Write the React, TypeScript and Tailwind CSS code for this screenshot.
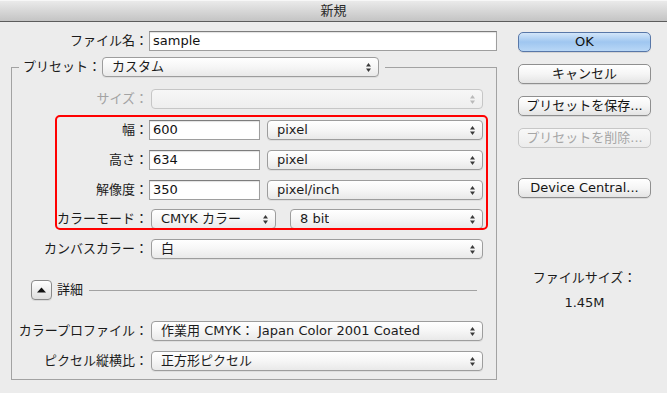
import type { ReactNode } from 'react';

// tiny up/down arrows of a mac popup button
function Arrows({ disabled }: { disabled?: boolean }) {
  return (
    <svg width="5" height="9" viewBox="0 0 5 9" className="ml-auto mr-[7px] shrink-0">
      <path d="M0 3.6 L2.5 0 L5 3.6 Z" fill={disabled ? '#b9b9b9' : '#3a3a3a'} />
      <path d="M0 5.4 L2.5 9 L5 5.4 Z" fill={disabled ? '#b9b9b9' : '#3a3a3a'} />
    </svg>
  );
}

function Select({ value, className, disabled }: { value?: ReactNode; className: string; disabled?: boolean }) {
  return (
    <div
      className={`flex h-[20px] shrink-0 items-center rounded-[4px] border pl-[9px] ${
        disabled
          ? 'border-[#c6c6c6] bg-linear-to-b from-[#f7f7f7] to-[#eeeeee] text-[#a0a0a0]'
          : 'border-[#9d9d9d] bg-linear-to-b from-white via-[#f6f6f6] to-[#e9e9e9] text-[#1b1b1b] shadow-[0_1px_0_rgba(0,0,0,0.06)]'
      } ${className}`}
    >
      <span className="truncate leading-[18px]">{value}</span>
      <Arrows disabled={disabled} />
    </div>
  );
}

function Field({ value, className }: { value: string; className: string }) {
  return (
    <div
      className={`flex h-[20px] shrink-0 items-center border border-[#9e9e9e] border-t-[#7d7d7d] bg-white pl-[3px] text-[#111] shadow-[inset_0_1px_1px_rgba(0,0,0,0.12)] ${className}`}
    >
      <span className="leading-[18px]">{value}</span>
    </div>
  );
}

function Label({ children, className, muted }: { children: ReactNode; className: string; muted?: boolean }) {
  return (
    <div className={`shrink-0 text-right leading-[20px] ${muted ? 'text-[#a3a3a3]' : 'text-[#1b1b1b]'} ${className}`}>
      {children}
    </div>
  );
}

function Button({ children, className = '', disabled, primary }: { children: ReactNode; className?: string; disabled?: boolean; primary?: boolean }) {
  let look = 'border-[#8f8f8f] bg-linear-to-b from-white via-[#f5f5f5] to-[#e4e4e4] text-[#141414] shadow-[0_1px_0_rgba(0,0,0,0.08)]';
  if (primary) look = 'border-[#5877a8] bg-linear-to-b from-[#d3e6f9] via-[#9fc6f0] to-[#b8d7f6] text-[#111] shadow-[0_1px_0_rgba(0,0,0,0.1)]';
  if (disabled) look = 'border-[#c7c7c7] bg-linear-to-b from-[#f8f8f8] to-[#ececec] text-[#a6a6a6]';
  return (
    <div className={`flex h-[20px] w-[133px] items-center justify-center rounded-[5px] border leading-[18px] ${look} ${className}`}>
      {children}
    </div>
  );
}

export default function App() {
  return (
    <div className="flex h-[393px] w-[667px] flex-col overflow-hidden bg-[#ececec] font-['DejaVu_Sans','Noto_Sans_CJK_JP',sans-serif] text-[13px]">
      {/* title bar */}
      <div className="flex h-[22px] shrink-0 items-center justify-center border-b border-[#5c5c5c] bg-linear-to-b from-[#ececec] to-[#c4c4c4] text-[#2a2a2a] shadow-[inset_0_1px_0_#f7f7f7]">
        <span className="leading-[20px]">新規</span>
      </div>

      <div className="flex">
        {/* left: form */}
        <div className="w-[497px] shrink-0">
          <div className="mt-[9px] flex items-center">
            <Label className="w-[148px]">ファイル名：</Label>
            <Field value="sample" className="ml-[1px] w-[348px]" />
          </div>

          <fieldset className="ml-[11px] mt-[6px] w-[486px] border border-[#a2a2a2] pb-[8px]">
            <legend className="ml-[7px] pl-[3px] pr-[6px]">
              <div className="flex items-center">
                <Label className="w-[79px]">プリセット：</Label>
                <Select value="カスタム" className="ml-[1px] w-[277px]" />
              </div>
            </legend>

            <div className="mt-[12px] flex items-center">
              <Label muted className="w-[136px]">サイズ：</Label>
              <Select disabled className="ml-[3px] w-[332px]" />
            </div>

            {/* highlighted block */}
            <div className="relative ml-[43px] mt-[6px] h-[115px] w-[433px] pl-[2px] pt-[5px]">
              <div className="flex items-center">
                <Label className="w-[91px]">幅：</Label>
                <Field value="600" className="ml-[1px] w-[111px]" />
                <Select value="pixel" className="ml-[7px] w-[216px]" />
              </div>
              <div className="mt-[10px] flex items-center">
                <Label className="w-[91px]">高さ：</Label>
                <Field value="634" className="ml-[1px] w-[111px]" />
                <Select value="pixel" className="ml-[7px] w-[216px]" />
              </div>
              <div className="mt-[10px] flex items-center">
                <Label className="w-[91px]">解像度：</Label>
                <Field value="350" className="ml-[1px] w-[111px]" />
                <Select value="pixel/inch" className="ml-[7px] w-[216px]" />
              </div>
              <div className="mt-[9px] flex items-center">
                <Label className="w-[91px] whitespace-nowrap">カラーモード：</Label>
                <Select value="CMYK カラー" className="ml-[3px] w-[125px]" />
                <Select value="8 bit" className="ml-[14px] w-[193px]" />
              </div>
              <div className="pointer-events-none absolute inset-0 rounded-[5px] border-2 border-[#ff0000]" />
            </div>

            <div className="mt-[9px] flex items-center">
              <Label className="w-[136px]">カンバスカラー：</Label>
              <Select value="白" className="ml-[3px] w-[332px]" />
            </div>

            <div className="mt-[21px] flex h-[20px] items-center">
              <div className="ml-[19px] flex h-[20px] w-[21px] items-center justify-center rounded-[4px] border border-[#8a8a8a] bg-linear-to-b from-white to-[#dedede] shadow-[0_1px_0_rgba(0,0,0,0.08)]">
                <svg width="9" height="6" viewBox="0 0 9 6">
                  <path d="M0 5.5 L4.5 0.5 L9 5.5 Z" fill="#111" />
                </svg>
              </div>
              <span className="ml-[5px] leading-[20px] text-[#1b1b1b]">詳細</span>
              <div className="ml-[6px] mr-[19px] h-px flex-1 bg-[#a2a2a2]" />
            </div>

            <div className="mt-[21px] flex items-center">
              <Label className="w-[136px] whitespace-nowrap">カラープロファイル：</Label>
              <Select value="作業用 CMYK： Japan Color 2001 Coated" className="ml-[3px] w-[332px]" />
            </div>
            <div className="mt-[10px] flex items-center">
              <Label className="w-[136px]">ピクセル縦横比：</Label>
              <Select value="正方形ピクセル" className="ml-[3px] w-[332px]" />
            </div>
          </fieldset>
        </div>

        {/* right: buttons */}
        <div className="ml-[21px] flex w-[133px] shrink-0 flex-col">
          <Button primary className="mt-[10px]">OK</Button>
          <Button className="mt-[12px]">キャンセル</Button>
          <Button className="mt-[12px]">プリセットを保存...</Button>
          <Button disabled className="mt-[12px]">プリセットを削除...</Button>
          <Button className="mt-[30px]">Device Central...</Button>
          <div className="mt-[72px] text-center leading-[16px] text-[#1b1b1b]">ファイルサイズ：</div>
          <div className="mt-[9px] text-center leading-[16px] text-[#1b1b1b]">1.45M</div>
        </div>
      </div>
    </div>
  );
}
